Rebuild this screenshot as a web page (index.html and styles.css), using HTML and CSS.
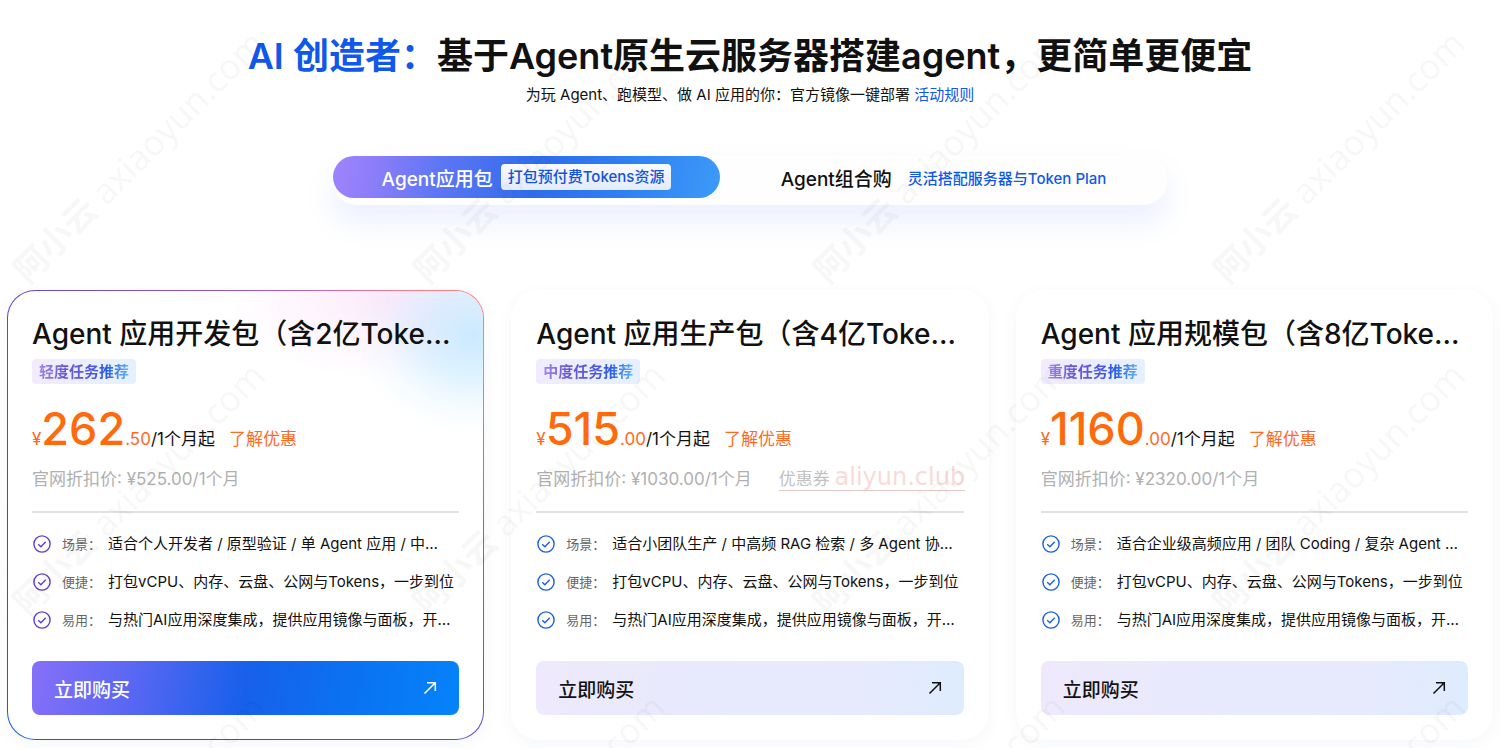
FILE: index.html
```html
<!DOCTYPE html>
<html lang="zh-CN">
<head>
<meta charset="utf-8">
<title>AI 创造者</title>
<link rel="stylesheet" href="styles.css">
</head>
<body>
<svg class="defs" aria-hidden="true">
  <symbol id="check" viewBox="0 0 18 18"><circle cx="9" cy="9" r="8.1"/><path d="M5.2 9.2l2.7 2.5 4.8-5"/></symbol>
  <symbol id="arrow" viewBox="0 0 14 14"><path d="M1.5 12.5L12 2M4 1.7h8.3V10"/></symbol>
</svg>
<main class="page">
  <header class="hero">
    <h1 class="hero-title"><span class="hero-accent">AI 创造者：</span>基于Agent原生云服务器搭建agent，更简单更便宜</h1>
    <p class="hero-sub">为玩 Agent、跑模型、做 AI 应用的你：官方镜像一键部署 <a class="rules" href="#rules">活动规则</a></p>
  </header>

  <div class="tabs" role="tablist">
    <button class="tab tab-active" type="button" role="tab" aria-selected="true">Agent应用包<span class="tab-badge">打包预付费Tokens资源</span></button>
    <button class="tab tab-plain" type="button" role="tab" aria-selected="false">Agent组合购<span class="tab-note">灵活搭配服务器与Token Plan</span></button>
  </div>

  <section class="cards">
    <article class="card card-featured">
      <h2 class="card-title">Agent 应用开发包（含2亿Toke…</h2>
      <p class="level"><span class="level-text">轻度任务推荐</span></p>
      <p class="price"><span class="minor">¥</span><span class="major">262</span><span class="minor">.50</span><span class="term">/1个月起</span><a class="offer" href="#offer">了解优惠</a></p>
      <p class="list-price"><span>官网折扣价: ¥525.00/1个月</span></p>
      <ul class="features">
        <li class="feature"><svg class="check"><use href="#check"/></svg><span class="label">场景：</span><span class="desc">适合个人开发者 / 原型验证 / 单 Agent 应用 / 中…</span></li>
        <li class="feature"><svg class="check"><use href="#check"/></svg><span class="label">便捷：</span><span class="desc">打包vCPU、内存、云盘、公网与Tokens，一步到位</span></li>
        <li class="feature"><svg class="check"><use href="#check"/></svg><span class="label">易用：</span><span class="desc">与热门AI应用深度集成，提供应用镜像与面板，开…</span></li>
      </ul>
      <button class="buy" type="button">立即购买<svg class="arrow"><use href="#arrow"/></svg></button>
    </article>

    <article class="card">
      <h2 class="card-title">Agent 应用生产包（含4亿Toke…</h2>
      <p class="level"><span class="level-text">中度任务推荐</span></p>
      <p class="price"><span class="minor">¥</span><span class="major">515</span><span class="minor">.00</span><span class="term">/1个月起</span><a class="offer" href="#offer">了解优惠</a></p>
      <p class="list-price"><span>官网折扣价: ¥1030.00/1个月</span><a class="coupon" href="#coupon">优惠券 <span class="coupon-site">aliyun.club</span></a></p>
      <ul class="features">
        <li class="feature"><svg class="check"><use href="#check"/></svg><span class="label">场景：</span><span class="desc">适合小团队生产 / 中高频 RAG 检索 / 多 Agent 协…</span></li>
        <li class="feature"><svg class="check"><use href="#check"/></svg><span class="label">便捷：</span><span class="desc">打包vCPU、内存、云盘、公网与Tokens，一步到位</span></li>
        <li class="feature"><svg class="check"><use href="#check"/></svg><span class="label">易用：</span><span class="desc">与热门AI应用深度集成，提供应用镜像与面板，开…</span></li>
      </ul>
      <button class="buy" type="button">立即购买<svg class="arrow"><use href="#arrow"/></svg></button>
    </article>

    <article class="card">
      <h2 class="card-title">Agent 应用规模包（含8亿Toke…</h2>
      <p class="level"><span class="level-text">重度任务推荐</span></p>
      <p class="price"><span class="minor">¥</span><span class="major">1160</span><span class="minor">.00</span><span class="term">/1个月起</span><a class="offer" href="#offer">了解优惠</a></p>
      <p class="list-price"><span>官网折扣价: ¥2320.00/1个月</span></p>
      <ul class="features">
        <li class="feature"><svg class="check"><use href="#check"/></svg><span class="label">场景：</span><span class="desc">适合企业级高频应用 / 团队 Coding / 复杂 Agent …</span></li>
        <li class="feature"><svg class="check"><use href="#check"/></svg><span class="label">便捷：</span><span class="desc">打包vCPU、内存、云盘、公网与Tokens，一步到位</span></li>
        <li class="feature"><svg class="check"><use href="#check"/></svg><span class="label">易用：</span><span class="desc">与热门AI应用深度集成，提供应用镜像与面板，开…</span></li>
      </ul>
      <button class="buy" type="button">立即购买<svg class="arrow"><use href="#arrow"/></svg></button>
    </article>
  </section>
</main>
<svg class="watermark" aria-hidden="true">
  <defs>
    <pattern id="mark" width="400" height="332" patternUnits="userSpaceOnUse">
      <text class="mark-text" transform="translate(28 285) rotate(-45)"><tspan class="mark-name">阿小云</tspan> axiaoyun.com</text>
    </pattern>
  </defs>
  <rect width="100%" height="100%" fill="url(#mark)"/>
</svg>
</body>
</html>
```
FILE: styles.css
```css
* { box-sizing: border-box; }

body {
  margin: 0;
  background: #fff;
  color: #111;
  font-family: Inter, "Noto Sans CJK SC", sans-serif;
  font-size: 15px;
}

h1, h2, p, ul { margin: 0; padding: 0; }
a { text-decoration: none; }
button { border: 0; font: inherit; color: inherit; cursor: pointer; }

.defs { display: none; }

.page { padding: 32px 7px 8px; }

.hero { text-align: center; }
.hero-title {
  font-size: 36px;
  line-height: 48px;
  font-weight: 600;
  white-space: nowrap;
}
.hero-accent { color: #1058ea; }
.hero-sub { margin-top: 4px; line-height: 22px; }
.rules { color: #1058ea; }

.tabs {
  display: flex;
  align-items: flex-start;
  width: 834px;
  max-width: 100%;
  height: 49px;
  margin: 50px auto 85px;
  border-radius: 24px;
  background: #fefefe;
  box-shadow: 0 16px 30px rgba(90, 120, 255, 0.12);
}
.tab {
  display: flex;
  align-items: center;
  justify-content: center;
  height: 42px;
  padding: 0;
  border-radius: 21px;
  background: none;
  font-size: 19px;
  font-weight: 500;
  white-space: nowrap;
}
.tab-active {
  width: 387px;
  gap: 8px;
  color: #fff;
  background: linear-gradient(100deg, #9f84fd 0%, #8a7df8 12%, #5d76f4 28%, #2f6cea 52%, #2e80f2 75%, #3c9af8 100%);
}
.tab-plain { flex: 1; gap: 16px; }
.tab-badge {
  padding: 0 7px;
  border-radius: 4px;
  background: linear-gradient(#f8faff, #e2ebff);
  color: #1452d8;
  font-size: 15px;
  line-height: 26px;
}
.tab-note { color: #1058ea; font-size: 15px; }

.cards {
  display: grid;
  grid-template-columns: repeat(3, minmax(0, 1fr));
  gap: 27px;
}
.card {
  display: flex;
  flex-direction: column;
  padding: 23px 24px 24px;
  border: 1px solid transparent;
  border-radius: 28px;
  background: #fff;
  box-shadow: 0 4px 16px rgba(60, 80, 140, 0.05);
}
.card-featured {
  background:
    radial-gradient(ellipse 120px 100px at 98% 10%, rgba(190, 230, 255, 0.8) 0%, rgba(190, 230, 255, 0.5) 40%, rgba(190, 230, 255, 0.12) 75%, rgba(190, 230, 255, 0) 100%) padding-box,
    radial-gradient(ellipse 160px 80px at 80% 2%, rgba(250, 218, 248, 0.6) 0%, rgba(250, 218, 248, 0.3) 45%, rgba(250, 218, 248, 0) 100%) padding-box,
    linear-gradient(#fff, #fff) padding-box,
    linear-gradient(45deg, #1560e0 0%, #2a55d8 25%, #5f48d8 50%, #9a58cc 75%, #ff7c86 92%) border-box;
}
.card-title {
  font-size: 28px;
  line-height: 40px;
  font-weight: 500;
  white-space: nowrap;
}
.level {
  align-self: flex-start;
  margin-top: 5px;
  padding: 0 7px;
  border-radius: 4px;
  background: linear-gradient(90deg, #f1ecfd, #e6f0fd);
  line-height: 25px;
  font-weight: 600;
}
.level-text {
  background: linear-gradient(90deg, #a184e8 0%, #6a58d4 28%, #5357dc 55%, #2a5ce8 75%, #62b4f2 100%);
  background-clip: text;
  color: transparent;
}
.price {
  display: flex;
  align-items: baseline;
  margin-top: 17px;
  font-size: 17px;
  line-height: 24px;
  white-space: nowrap;
}
.major {
  color: #ff6a0b;
  font-size: 45px;
  line-height: 56px;
  font-weight: 500;
}
.minor, .offer { color: #ff6a1f; }
.offer { margin-left: 14px; }
.list-price {
  display: flex;
  align-items: baseline;
  margin-top: 9px;
  padding-bottom: 19px;
  border-bottom: 2px solid #e0e1e3;
  color: #b0b0b0;
  font-size: 17px;
  line-height: 26px;
  white-space: nowrap;
}
.coupon { margin-left: 27px; border-bottom: 1px solid #e3c9c6; color: #c2c2c2; line-height: 22px; }
.coupon-site { color: #f8dbd8; font-family: "DejaVu Sans", sans-serif; font-size: 24px; }

.features {
  display: flex;
  flex-direction: column;
  gap: 14px;
  padding: 19px 0 29px;
  list-style: none;
}
.feature {
  display: flex;
  align-items: center;
  line-height: 24px;
  white-space: nowrap;
}
.check {
  width: 18px;
  height: 18px;
  margin: 0 11px 0 1px;
  fill: none;
  stroke: #1c5fe0;
  stroke-width: 1.4;
}
.card-featured .check { stroke: #5a3fd6; }
.label { width: 46px; color: #666; font-size: 13px; }

.buy {
  display: flex;
  align-items: center;
  justify-content: space-between;
  height: 54px;
  padding: 0 22px;
  border-radius: 8px;
  background: linear-gradient(100deg, #efe9fc 0%, #e8e9fd 35%, #e7eafd 75%, #ddecfe 100%);
  font-size: 19px;
  font-weight: 500;
}
.card-featured .buy {
  background: linear-gradient(100deg, #8670f8 0%, #5667f2 25%, #1760ea 50%, #0a72f2 75%, #0583fa 100%);
  color: #fff;
}
.arrow {
  width: 14px;
  height: 14px;
  fill: none;
  stroke: currentColor;
  stroke-width: 1.5;
}

.watermark {
  position: absolute;
  top: 0;
  left: 0;
  width: 100%;
  height: 100%;
  pointer-events: none;
}
.mark-text {
  fill: #000;
  fill-opacity: 0.03;
  font-family: "Open Sans", "Noto Sans CJK SC", sans-serif;
  font-size: 35px;
  font-weight: 500;
}
.mark-name { font-size: 34px; font-weight: 700; }
```
